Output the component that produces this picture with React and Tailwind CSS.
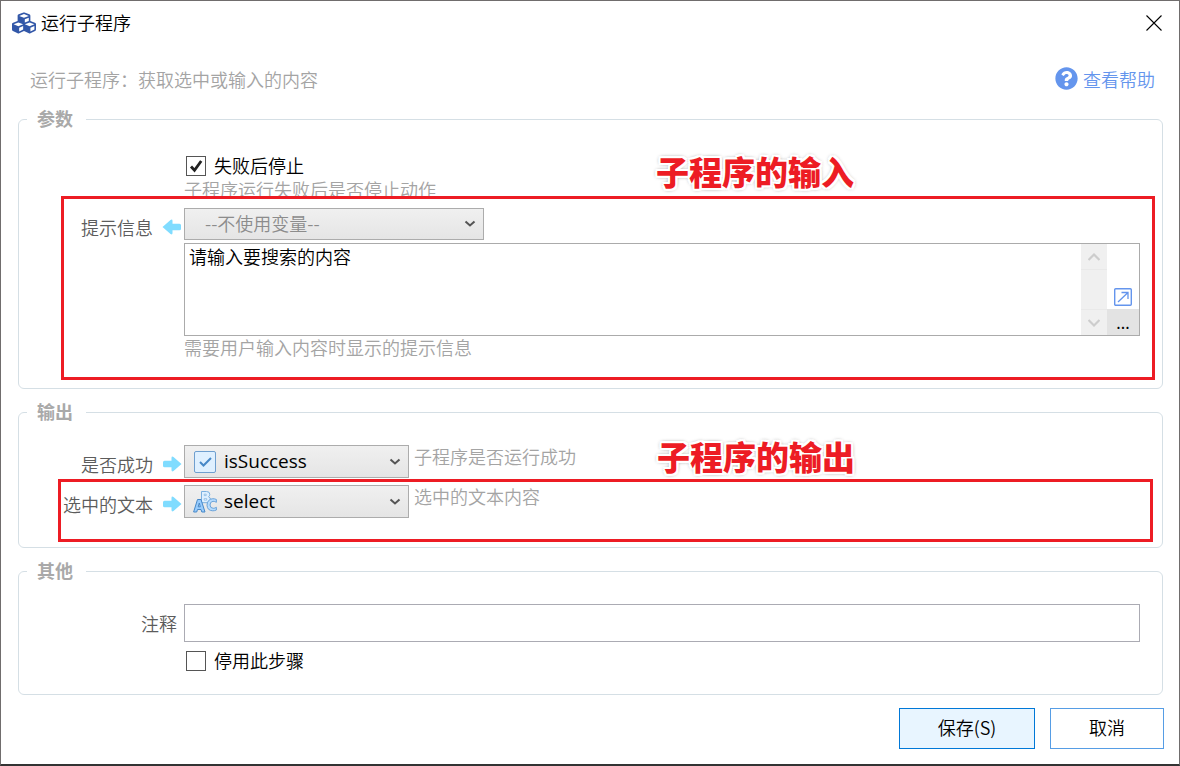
import { FaCubes, FaQuestionCircle } from "react-icons/fa";

function Group({ title, className, children }) {
  return (
    <fieldset className={`mr-4 ml-[17px] min-w-0 rounded-md border border-[#d5dfe5] ${className}`}>
      <legend className="ml-2 h-6 pr-[13px] pl-2.5 leading-[22px] font-bold text-[#a9a9a9]">{title}</legend>
      {children}
    </fieldset>
  );
}

function Arrow({ left }) {
  return (
    <svg viewBox="0 0 20 18" className={`h-[18px] w-5 shrink-0 ${left ? "" : "rotate-180"}`} aria-hidden="true">
      <path
        d="M.5 9 8.500 2Q10.500 .8 10.500 3V5.700H17.500Q19 5.700 19 7.200V10.800Q19 12.300 17.500 12.300H10.500V15Q10.500 17.200 8.500 16Z"
        fill="#80dcff"
      />
    </svg>
  );
}

function Label({ htmlFor, children, arrow }) {
  return (
    <label
      htmlFor={htmlFor}
      className={`flex w-[165px] shrink-0 items-center justify-end leading-[22px] whitespace-nowrap text-[#5c5c5c] ${arrow ? "gap-[9px] pr-0.5" : "pr-[7px]"}`}
    >
      {children}
      {arrow && <Arrow left={arrow === "left"} />}
    </label>
  );
}

function Dropdown({ id, value, icon, className }) {
  return (
    <div className={`relative shrink-0 ${className}`}>
      <select
        id={id}
        defaultValue={value}
        className={`h-full w-full appearance-none border border-[#acacac] bg-linear-to-b from-[#f0f0f0] to-[#e5e5e5] pb-0.5 ${icon ? "pl-[39px] font-['Open_Sans','Noto_Sans_CJK_SC',sans-serif] text-[19px] font-normal text-black" : "pl-5 text-[#8c8c8c]"}`}
      >
        <option>{value}</option>
      </select>
      {icon && <span className="pointer-events-none absolute inset-y-0 left-[9px] flex items-center">{icon}</span>}
      <svg viewBox="0 0 12 8" className="pointer-events-none absolute top-1/2 right-2 h-2 w-3 -translate-y-1/2" aria-hidden="true">
        <path d="M1.500 1.500 6 5.500 10.500 1.500" fill="none" stroke="#555" strokeWidth="2" />
      </svg>
    </div>
  );
}

function CheckIcon() {
  return (
    <svg viewBox="0 0 24 24" className="size-6" aria-hidden="true">
      <rect x="1.500" y="1.500" width="21" height="21" rx="1.500" fill="#dff0ff" stroke="#6f9fcf" />
      <path d="m7 12 3.500 3.500L18 8" fill="none" stroke="#4788c7" strokeWidth="2" />
    </svg>
  );
}

function LettersIcon() {
  return (
    <svg viewBox="0 0 24 24" className="size-6" aria-hidden="true" fill="none" strokeLinejoin="round">
      <path
        d="M8.500 1.500H13.500Q16.800 1.500 16.800 4.300 16.800 6 15.500 6.700 17.500 7.400 17.500 9.500 17.500 12.700 14 12.700H8.500Z"
        fill="#dff0ff"
        stroke="#7bb0e0"
      />
      <path d="M11.200 4.200h2v1.400h-2zM11.200 8.600h2.500v1.500h-2.500z" fill="#fff" stroke="#7bb0e0" strokeWidth=".7" />
      <path
        d="M4.500 9.500H8L12 22H8.800L8 19.500H4.500L3.700 22H.6ZM5.200 16.800H7.300L6.300 13Z"
        fill="#98ccfd"
        stroke="#4788c7"
      />
      <path
        d="M23.400 9.500V12.300Q21.800 11.300 20 11.300 17 11.600 17 15 17.200 18.200 20.200 18.300 22 18.300 23.400 17.300V20Q21.800 20.800 19.800 20.800 14.300 20.600 14 15.200 14.300 9.200 19.800 8.700 21.800 8.700 23.400 9.500Z"
        fill="#b6dcfe"
        stroke="#6aa3da"
      />
    </svg>
  );
}

function Check({ id, checked, children }) {
  return (
    <div className="flex h-7 items-center gap-2 pl-[167px] text-black">
      <span className="relative flex size-5">
        <input id={id} type="checkbox" defaultChecked={checked} className="peer size-5 appearance-none border border-[#555] bg-white" />
        <svg viewBox="0 0 20 20" className="pointer-events-none absolute inset-0 hidden peer-checked:block" aria-hidden="true">
          <path d="m5 10.500 3.500 3.800L15.200 5" fill="none" stroke="#212121" strokeWidth="2.800" />
        </svg>
      </span>
      <label htmlFor={id} className="pb-0.5 leading-[22px]">{children}</label>
    </div>
  );
}

function Callout({ className, children }) {
  return (
    <div
      className={`pointer-events-none absolute text-[33px] leading-[38px] font-black whitespace-nowrap text-[#ed1c24] [text-shadow:2px_0_#fff,-2px_0_#fff,0_2px_#fff,0_-2px_#fff,2px_2px_#fff,-2px_2px_#fff,2px_-2px_#fff,-2px_-2px_#fff,0_0_4px_#777,0_0_4px_#999] ${className}`}
    >
      {children}
    </div>
  );
}

function Frame({ className }) {
  return <div className={`pointer-events-none absolute border-3 border-[#ed1c24] ${className}`} />;
}

function Chevron({ down }) {
  return (
    <svg viewBox="0 0 12 10" className={`h-2.5 w-3 ${down ? "rotate-180" : ""}`} aria-hidden="true">
      <path d="M.5 8 6 2.500 11.500 8" fill="none" stroke="#cdcdcd" strokeWidth="2.200" />
    </svg>
  );
}

export default function App() {
  return (
    <form
      onSubmit={(e) => e.preventDefault()}
      className="flex min-h-screen flex-col border border-b-2 border-[#706d6d] border-b-[#333] bg-white font-['Noto_Sans_CJK_SC',sans-serif] text-[18px] leading-6 font-[350]"
    >
      <header className="flex h-[41px] items-center gap-[5px] pt-0.5 pr-[17px] pl-[11px] text-black">
        <FaCubes className="size-6 text-[#3257a8]" />
        <h1 className="flex-1 pb-0.5 leading-[22px]">运行子程序</h1>
        <button type="button" aria-label="关闭" className="flex size-4 items-center justify-center">
          <svg viewBox="0 0 16 16" className="size-4" aria-hidden="true">
            <path d="m.5.5 15 15m0-15-15 15" stroke="#000" strokeWidth="1.100" />
          </svg>
        </button>
      </header>

      <div className="flex h-[65px] items-center justify-between pt-2 pr-6 pl-[29px]">
        <p className="text-[#a4a4a4]">运行子程序：获取选中或输入的内容</p>
        <a href="#help" className="flex items-center gap-[5px] text-[#6495ed]">
          <FaQuestionCircle className="size-[23px]" />
          查看帮助
        </a>
      </div>

      <Group title="参数" className="pt-[21px] pb-[30px]">
        <div className="relative">
          <Check id="stop" checked>失败后停止</Check>
          <p className="pl-[165px] leading-[18px] text-[#a4a4a4]">子程序运行失败后是否停止动作</p>
          <Callout className="top-0 left-[637px]">子程序的输入</Callout>
        </div>
        <div className="relative mt-2.5">
          <div className="flex h-8">
            <div className="flex pt-1.5">
              <Label htmlFor="prompt-variable" arrow="left">提示信息</Label>
            </div>
            <Dropdown id="prompt-variable" value="--不使用变量--" className="w-[300px]" />
          </div>
          <div className="mt-[3px] mr-[22px] ml-[165px] flex h-[93px] border border-[#ababab]">
            <textarea
              aria-label="提示信息"
              defaultValue="请输入要搜索的内容"
              className="min-w-0 flex-1 resize-none overflow-hidden px-1 text-black outline-none"
            />
            <div className="flex w-[26px] flex-col justify-between bg-[#f0f0f0]">
              <button type="button" aria-label="向上滚动" className="flex h-[26px] items-center justify-center border-b border-[#e9e9e9]">
                <Chevron />
              </button>
              <button type="button" aria-label="向下滚动" className="flex h-[26px] items-center justify-center border-t border-[#e9e9e9]">
                <Chevron down />
              </button>
            </div>
            <div className="flex w-8 flex-col justify-end">
              <button type="button" aria-label="放大编辑" className="flex h-6 items-center justify-center">
                <svg viewBox="0 0 18 18" className="size-[18px]" fill="none" stroke="#6495ed" aria-hidden="true">
                  <rect x=".7" y=".7" width="16.600" height="16.600" rx="1" strokeWidth="1.400" />
                  <path d="M4 14 14 4.500M7.500 4.500H14V11" strokeWidth="1.300" />
                </svg>
              </button>
              <button type="button" className="h-[26px] bg-[#e3e3e3] text-base leading-6 font-normal text-black">...</button>
            </div>
          </div>
          <p className="pl-[165px] leading-[22px] text-[#a4a4a4]">需要用户输入内容时显示的提示信息</p>
          <Frame className="-top-3 right-[7px] -bottom-[22px] left-[42px]" />
        </div>
      </Group>

      <Group title="输出" className="mt-[11px] pt-[21px] pb-[29px]">
        <div className="relative flex h-[33px]">
          <div className="flex pt-1">
            <Label htmlFor="success" arrow="right">是否成功</Label>
          </div>
          <Dropdown id="success" value="isSuccess" icon={<CheckIcon />} className="w-[225px]" />
          <p className="pl-[5px] leading-[22px] text-[#a4a4a4]">子程序是否运行成功</p>
          <Callout className="-top-2 left-[638px]">子程序的输出</Callout>
        </div>
        <div className="relative mt-[7px] flex h-[33px]">
          <div className="flex pt-1">
            <Label htmlFor="selected" arrow="right">选中的文本</Label>
          </div>
          <Dropdown id="selected" value="select" icon={<LettersIcon />} className="w-[225px]" />
          <p className="pl-[5px] leading-[22px] text-[#a4a4a4]">选中的文本内容</p>
          <Frame className="-top-1.5 right-[9px] -bottom-6 left-[39px]" />
        </div>
      </Group>

      <Group title="其他" className="mt-[11px] pt-[21px] pb-[19px]">
        <div className="mr-[22px] flex">
          <Label htmlFor="comment">注释</Label>
          <input id="comment" type="text" className="h-[38px] min-w-0 flex-1 border border-[#ababb3] px-1 text-black outline-none" />
        </div>
        <div className="mt-[5px]">
          <Check id="disable">停用此步骤</Check>
        </div>
      </Group>

      <footer className="mt-[13px] flex justify-end gap-[15px] pr-[15px] pb-[15px] text-black">
        <button type="submit" className="h-[41px] w-[136px] border border-[#0078d7] bg-[#e8f5ff] pb-1">保存(S)</button>
        <button type="button" className="h-[41px] w-[114px] border border-[#569de5] bg-white pb-1">取消</button>
      </footer>
    </form>
  );
}
